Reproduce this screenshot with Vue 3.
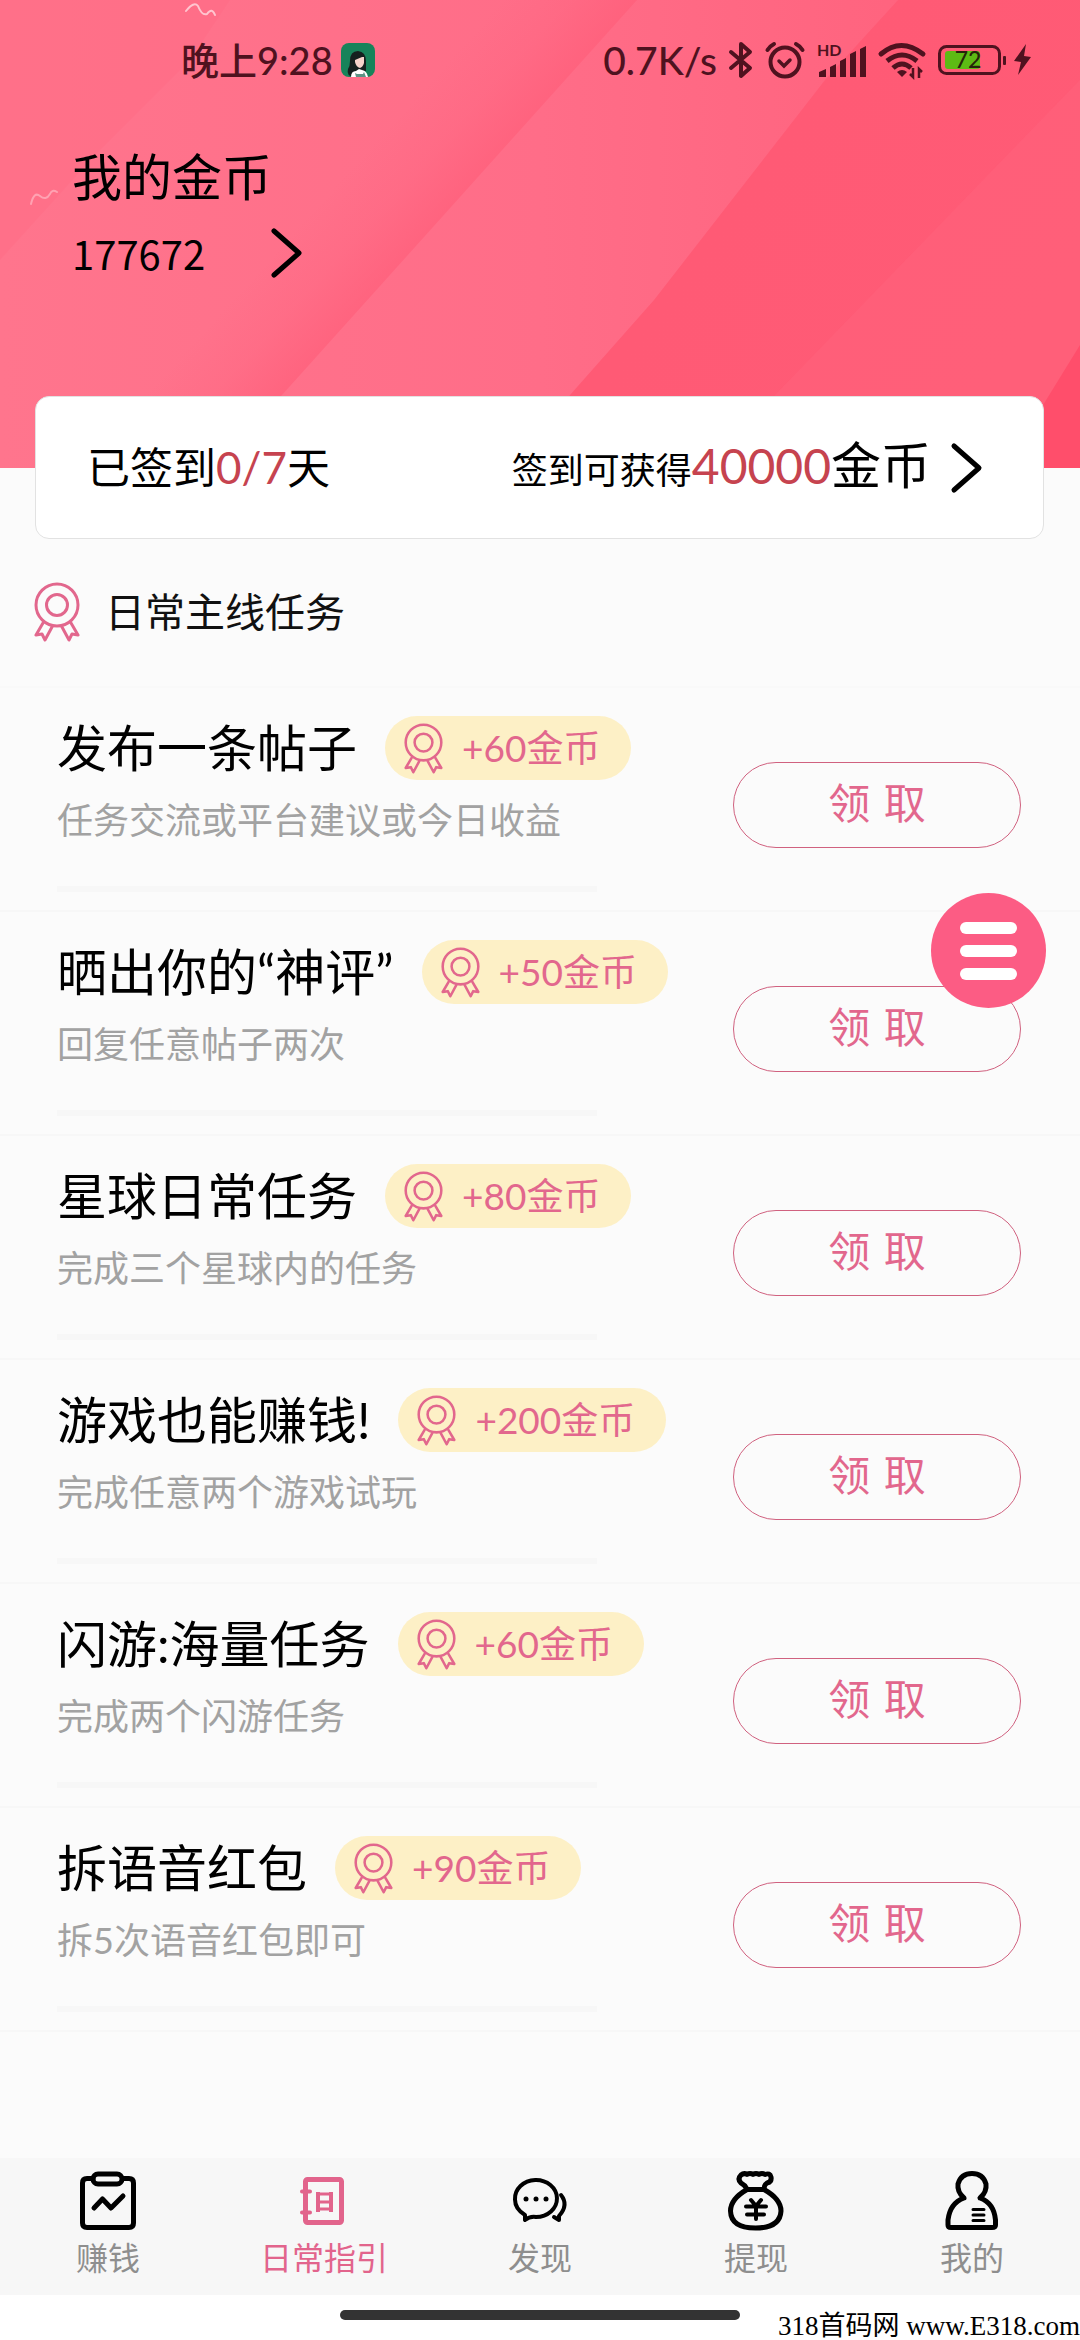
<script setup>
import { ref } from 'vue'

const tasks = [
  { title: '发布一条帖子', reward: 60, desc: '任务交流或平台建议或今日收益' },
  { title: '晒出你的“神评”', reward: 50, desc: '回复任意帖子两次' },
  { title: '星球日常任务', reward: 80, desc: '完成三个星球内的任务' },
  { title: '游戏也能赚钱!', reward: 200, desc: '完成任意两个游戏试玩' },
  { title: '闪游:海量任务', reward: 60, desc: '完成两个闪游任务' },
  { title: '拆语音红包', reward: 90, desc: '拆5次语音红包即可' },
]

const tabs = [
  { id: 'earn', label: '赚钱' },
  { id: 'guide', label: '日常指引' },
  { id: 'discover', label: '发现' },
  { id: 'withdraw', label: '提现' },
  { id: 'mine', label: '我的' },
]
const active = ref('guide')
</script>

<template>
  <div class="page">
    <!-- shared ribbon symbol -->
    <svg class="defs" aria-hidden="true">
      <symbol id="ribbon" viewBox="0 0 46 60">
        <g fill="none" stroke="currentColor" stroke-width="3" stroke-linejoin="round" stroke-linecap="round">
          <circle cx="23" cy="23" r="21" />
          <circle cx="23" cy="23" r="10.5" />
          <path d="M9 41 L2 53 L8 52 L11 58 L18 45" />
          <path d="M37 41 L44 53 L38 52 L35 58 L28 45" />
        </g>
      </symbol>
    </svg>

    <header class="hero">
      <svg class="hero-bg" viewBox="0 0 1080 468" preserveAspectRatio="none" aria-hidden="true">
        <defs>
          <linearGradient id="base" x1="0" y1="0" x2="1" y2="0">
            <stop offset="0" stop-color="#ff758d" />
            <stop offset="0.5" stop-color="#ff6d88" />
            <stop offset="1" stop-color="#ff5f7a" />
          </linearGradient>
          <linearGradient id="fold" gradientUnits="userSpaceOnUse" x1="386" y1="130" x2="460" y2="197">
            <stop offset="0" stop-color="#ff5c78" stop-opacity="0" />
            <stop offset="0.5" stop-color="#ff5c78" stop-opacity="0.2" />
            <stop offset="1" stop-color="#ff5c78" stop-opacity="0.6" />
          </linearGradient>
          <linearGradient id="deep" gradientUnits="userSpaceOnUse" x1="740" y1="190" x2="1000" y2="380">
            <stop offset="0" stop-color="#ff5a75" />
            <stop offset="1" stop-color="#ff5b76" />
          </linearGradient>
        </defs>
        <rect width="1080" height="468" fill="url(#base)" />
        <path d="M0 0 H230 L190 60 L95 155 L0 260 Z" fill="#ff6882" opacity="0.3" />
        <path d="M637 0 L460 197 L282 395 L216 468 H0 V260 L230 0 Z" fill="url(#fold)" />
        <path d="M898 0 H1080 V468 H520 L570 395 L654 300 L825 80 Z" fill="url(#deep)" />
        <path d="M1080 80 L775 395 L720 468 H1080 Z" fill="#ff6680" opacity="0.35" />
        <path d="M1080 345 L1040 410 V468 H1080 Z" fill="#ff4e6b" />
        <g fill="none" stroke="#fff" stroke-width="2" stroke-linecap="round">
          <path d="M186 11 Q194 1 198 6 Q202 16 207 14 Q212 7 215 15" opacity="0.6" />
          <path d="M31 204 Q34 191 40 196 Q46 201 50 194 Q52 189 57 192" opacity="0.35" />
        </g>
      </svg>

      <div class="status">
        <span>晚上9:28</span>
        <svg class="avatar" width="34" height="34" viewBox="0 0 34 34">
          <rect width="34" height="34" rx="8" fill="#17835a" />
          <path d="M9 18 Q9 8 17 8 Q25 9 25 18 V28 H15 L13 34 Q5 33 7 26 Q9 23 9 18Z" fill="#15201f" />
          <path d="M14 17 L21 14 H23 V20 Q22 24 19 25 Q15 24 14 19Z" fill="#f6d3cb" />
          <path d="M10 34 Q10 28 15 28 L18 26 L21 27 Q26 28 27 34Z" fill="#fff" />
          <path d="M14 30 L15 34 H25 L23 29 L22 31 H16Z" fill="#5c9284" />
        </svg>
        <div class="status-right">
          <span>0.7K/s</span>
          <svg width="24" height="38" viewBox="0 0 24 38" fill="none" stroke="currentColor" stroke-width="4" stroke-linejoin="round" stroke-linecap="round">
            <path d="M2 11 L21 27 L12 35 V3 L21 11 L2 27" />
          </svg>
          <svg width="40" height="38" viewBox="0 0 40 38" fill="none" stroke="currentColor" stroke-width="4" stroke-linecap="round">
            <circle cx="20" cy="21" r="14.500" />
            <path d="M14 20 L19 25 L25 19" stroke-width="3.500" />
            <path d="M2.500 9 Q5 5 9 3 M37.500 9 Q35 5 31 3" />
          </svg>
          <svg width="50" height="38" viewBox="0 0 50 38" fill="currentColor">
            <text x="0" y="15" font-size="16" font-weight="700">HD</text>
            <path d="M2 36 V31 L9 28 V36Z M13 36 V26 L19 23 V36Z M23 36 V20 L29 17 V36Z M33 36 V13 L39 10 V36Z M43 36 V8 L49 5 V36Z" />
          </svg>
          <svg width="46" height="38" viewBox="0 0 46 38" fill="none" stroke="currentColor" stroke-width="5">
            <path d="M2 13 Q22 -4 44 13" stroke-linecap="round" />
            <path d="M8 20 Q23 8 38 20" />
            <path d="M14 27 Q23 19 32 27" />
            <path d="M23 36 L18 31 Q23 27 28 31Z" fill="currentColor" stroke="none" />
            <path d="M34 27 V36 L31 33 M40 37 V28 L43 31" stroke-width="2.500" />
          </svg>
          <!-- battery with its charging bolt -->
          <svg width="95" height="38" viewBox="0 0 95 38">
            <rect x="2.500" y="5.500" width="60" height="27" rx="7" fill="none" stroke="currentColor" stroke-width="3" />
            <rect x="8" y="10" width="35" height="18" rx="3" fill="#5dbb14" />
            <rect x="66" y="15" width="3" height="9" rx="1" fill="currentColor" />
            <text x="31" y="27" text-anchor="middle" font-size="23" fill="#26240a">72</text>
            <path d="M89 3 L77 20 L84 21 L81 34 L94 16 L87 15Z" fill="currentColor" />
          </svg>
        </div>
      </div>

      <div class="balance">
        <h1>我的金币</h1>
        <a class="amount" href="#coins">
          <span>177672</span>
          <svg width="32" height="50" viewBox="0 0 32 50" class="chevron"><path d="M3 3 L28 25 L3 47" /></svg>
        </a>
      </div>
    </header>

    <a class="signin" href="#signin">
      <span class="days">已签到<b>0/7</b>天</span>
      <span class="gain">签到可获得<b>40000</b><em>金币</em></span>
      <svg width="32" height="50" viewBox="0 0 32 50" class="chevron"><path d="M3 3 L28 25 L3 47" /></svg>
    </a>

    <main>
      <h2 class="section">
        <svg class="ribbon" width="46" height="60"><use href="#ribbon" /></svg>
        日常主线任务
      </h2>
      <ul class="tasks">
        <li v-for="task in tasks" :key="task.title" class="task">
          <div class="info">
            <div class="head">
              <h3>{{ task.title }}</h3>
              <span class="chip">
                <svg width="39" height="51"><use href="#ribbon" /></svg>
                +{{ task.reward }}金币
              </span>
            </div>
            <p>{{ task.desc }}</p>
            <div class="track"></div>
          </div>
          <button type="button" class="claim">领 取</button>
        </li>
      </ul>
    </main>

    <button type="button" class="fab" aria-label="菜单">
      <i></i><i></i><i></i>
    </button>

    <footer class="bottom">
      <nav class="tabs">
        <a
          v-for="tab in tabs"
          :key="tab.id"
          :href="'#' + tab.id"
          class="tab"
          :class="{ active: active === tab.id }"
          @click.prevent="active = tab.id"
        >
          <svg v-if="tab.id === 'earn'" width="60" height="60" viewBox="0 0 60 60" fill="none" stroke="currentColor" stroke-width="5" stroke-linecap="round" stroke-linejoin="round">
            <path d="M15 8.500 H9 Q4.500 8.500 4.500 13 V53 Q4.500 57.500 9 57.500 H51 Q55.500 57.500 55.500 53 V13 Q55.500 8.500 51 8.500 H45" />
            <rect x="15" y="4" width="29" height="10" rx="5" />
            <path d="M16 38 L24.500 29 L33 38 L45 26" />
          </svg>
          <svg v-else-if="tab.id === 'guide'" width="60" height="60" viewBox="0 0 60 60" fill="none" stroke="currentColor" stroke-width="5">
            <rect x="11.500" y="9.500" width="36" height="43" rx="2" />
            <path d="M8 21.500 H16 M8 42.500 H16" stroke-width="4" stroke-linecap="round" />
            <path d="M24 22 V42 M37 22 V42" stroke-width="4" />
            <path d="M23 24 H38 M23 32 H38 M23 39 H38" stroke-width="3" />
          </svg>
          <svg v-else-if="tab.id === 'discover'" width="60" height="60" viewBox="0 0 60 60" fill="none" stroke="currentColor" stroke-width="4" stroke-linecap="round" stroke-linejoin="round">
            <path d="M15 45 Q5 39 5 29.500 A21 18.500 0 1 1 26 47 Q20 46 15 50 Z" />
            <path d="M51 25 Q59 35 49 46 V50 L44 47" />
            <g fill="currentColor" stroke="none">
              <circle cx="16" cy="29" r="2.500" /><circle cx="26" cy="29" r="2.500" /><circle cx="36" cy="29" r="2.500" />
            </g>
          </svg>
          <svg v-else-if="tab.id === 'withdraw'" width="60" height="60" viewBox="0 0 60 60" fill="none" stroke="currentColor" stroke-width="5" stroke-linecap="round" stroke-linejoin="round">
            <path d="M21 19 Q19 15 15 13 Q11 9 15 5 Q18 2.500 21 4.500 Q24 2.500 27 4.500 Q30 2.500 33 4.500 Q36 2.500 39 4.500 Q44 2.500 45 7 Q46 12 41 13 Q38 15 38 19" />
            <path d="M21 19.500 H38 Q55 29 55 41 Q54 58 29.500 58 Q5 58 4.500 41 Q4.500 29 21 19.500Z" />
            <path d="M25 30 L30 36 L35 30 M20 36.500 H40 M21 44.500 H38 M30 36 V49" stroke-width="4" />
          </svg>
          <svg v-else width="60" height="60" viewBox="0 0 60 60" fill="none" stroke="currentColor" stroke-width="5" stroke-linecap="round" stroke-linejoin="round">
            <path d="M22 28 Q15 22 16 14 Q19 3.500 30 3.500 Q41 3.500 44 14 Q45 22 38 28 Q52 33 53.500 50 V55 Q53.500 57.500 50 57.500 H9 Q6 57.500 6 55 V50 Q8 33 22 28Z" />
            <path d="M31 39.500 H42 M31 45 H42 M31 50.500 H42" stroke-width="3" />
          </svg>
          <span>{{ tab.label }}</span>
        </a>
      </nav>
      <div class="home"><i></i></div>
      <span class="source">318首码网 www.E318.com</span>
    </footer>
  </div>
</template>

<style>
body {
  margin: 0;
  background: #fbfbfb;
}
</style>

<style scoped>
.page {
  --pink: #e2678d;
  position: relative;
  display: flex;
  flex-direction: column;
  min-height: 100vh;
  background: #fbfbfb;
  color: #000;
  font-family: Lato, "Noto Sans CJK SC", sans-serif;
}
h1, h2, h3, p, ul {
  margin: 0;
  padding: 0;
  font-weight: 400;
}
a {
  color: inherit;
  text-decoration: none;
}
b, em {
  font-style: normal;
  font-weight: 400;
}
svg {
  display: block;
  flex: none;
  overflow: visible;
}
.defs {
  position: absolute;
  width: 0;
  height: 0;
}
.chevron {
  fill: none;
  stroke: #000;
  stroke-width: 5;
  stroke-linecap: round;
  stroke-linejoin: round;
}

.hero {
  position: relative;
  padding: 40px 48px 185px 72px;
}
.hero-bg {
  position: absolute;
  inset: 0;
  width: 100%;
  height: 100%;
  overflow: hidden;
}
.status {
  position: relative;
  display: flex;
  align-items: center;
  gap: 8px;
  height: 40px;
  padding-left: 109px;
  color: #4f121f;
  font-size: 38px;
  line-height: 40px;
  font-weight: 500;
}
.status-right {
  display: flex;
  align-items: center;
  gap: 12px;
  margin-left: auto;
  font-size: 39px;
}
.balance {
  position: relative;
  display: flex;
  flex-direction: column;
  gap: 16px;
  margin-top: 67px;
  line-height: 60px;
}
h1 {
  font-size: 50px;
  line-height: 60px;
}
.amount {
  display: flex;
  align-items: center;
  gap: 66px;
  font-family: "Noto Sans CJK SC", sans-serif;
  font-size: 40px;
}

.signin {
  position: relative;
  display: flex;
  align-items: center;
  box-sizing: border-box;
  height: 143px;
  margin: -72px 36px 0 35px;
  padding: 0 60px 0 51px;
  border: 1px solid #e2e2e2;
  border-radius: 14px;
  background: #fff;
  line-height: 60px;
}
.signin b {
  color: #c6434f;
}
.days {
  font-size: 43px;
}
.days b {
  font-size: 44px;
}
.gain {
  margin-left: auto;
  margin-right: 20px;
  font-size: 36px;
}
.gain b {
  font-size: 48px;
}
.gain em {
  font-size: 50px;
}

.section {
  display: flex;
  align-items: center;
  gap: 25px;
  padding: 43px 34px 44px;
  border-bottom: 2px solid #f9f9f9;
  color: #111;
  font-size: 40px;
  line-height: 60px;
}
.ribbon {
  color: var(--pink);
}
.tasks {
  list-style: none;
}
.task {
  display: flex;
  align-items: flex-start;
  justify-content: space-between;
  padding: 28px 59px 18px 57px;
  border-bottom: 2px solid #f7f7f7;
}
.head {
  display: flex;
  align-items: center;
  gap: 28px;
}
h3 {
  font-size: 50px;
  line-height: 64px;
}
.chip {
  display: flex;
  align-items: center;
  gap: 19px;
  height: 64px;
  padding: 0 31px 0 19px;
  border-radius: 32px;
  background: #fdf0c6;
  color: var(--pink);
  font-size: 37px;
  line-height: 60px;
}
.task p {
  margin-top: 18px;
  color: #a2a2a2;
  font-size: 36px;
  line-height: 44px;
}
.track {
  width: 540px;
  height: 6px;
  margin-top: 44px;
  background: #f7f7f7;
}
.claim {
  width: 288px;
  height: 86px;
  margin-top: 46px;
  padding: 0;
  border: 1px solid #d0617f;
  border-radius: 43px;
  background: transparent;
  color: var(--pink);
  font: 42px/60px "DejaVu Sans", "Noto Sans CJK SC", sans-serif;
}

.fab {
  position: absolute;
  top: 893px;
  right: 34px;
  display: flex;
  flex-direction: column;
  align-items: center;
  justify-content: center;
  gap: 11px;
  width: 115px;
  height: 115px;
  padding: 0;
  border: 0;
  border-radius: 50%;
  background: #fc5c84;
}
.fab i {
  width: 57px;
  height: 12px;
  border-radius: 6px;
  background: #fff;
}

.bottom {
  position: relative;
  margin-top: auto;
  background: #fff;
}
.tabs {
  display: flex;
  background: #f7f7f7;
}
.tab {
  flex: 1;
  display: flex;
  flex-direction: column;
  align-items: center;
  gap: 8px;
  padding: 12px 0 17px;
  font-size: 32px;
  line-height: 40px;
}
.tab span {
  color: #8e8e8e;
}
.tab.active,
.tab.active span {
  color: #e2648c;
}
.home {
  display: flex;
  justify-content: center;
  align-items: flex-start;
  height: 30px;
  padding-top: 15px;
}
.home i {
  width: 37%;
  height: 10px;
  border-radius: 5px;
  background: #333;
}
.source {
  position: absolute;
  right: 0;
  bottom: 0;
  font: 27px/28px "Liberation Serif", "Noto Sans CJK SC", serif;
  white-space: nowrap;
}
</style>
